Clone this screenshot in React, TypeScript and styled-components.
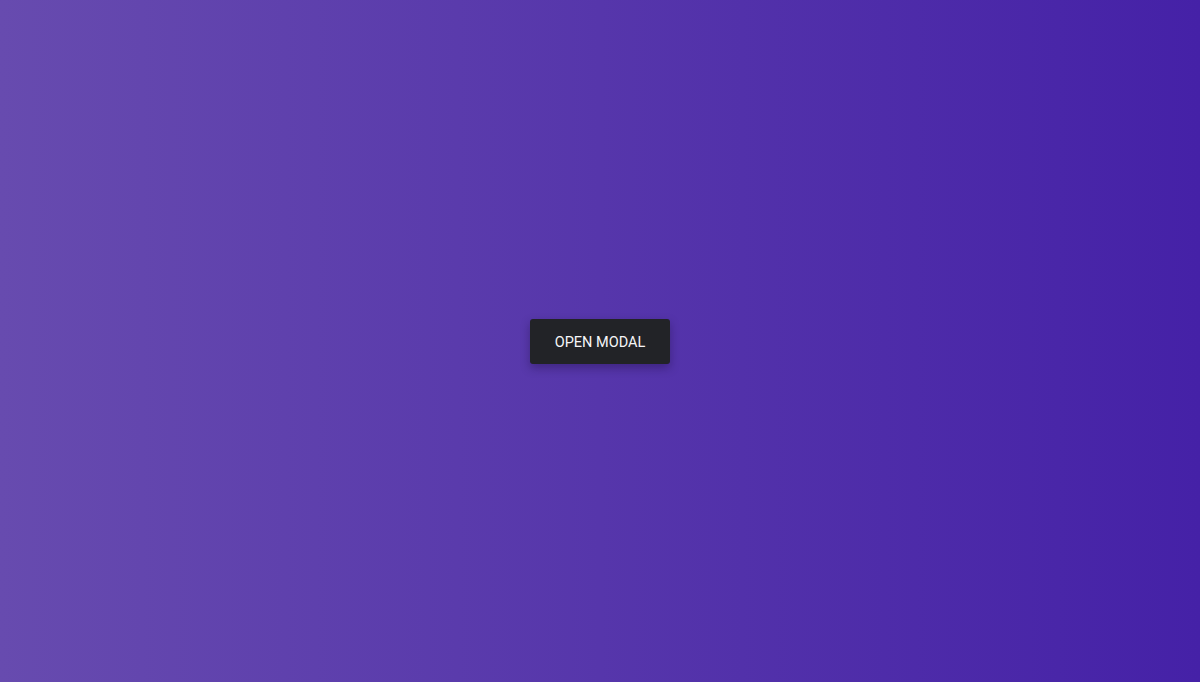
import { FC } from "react";
import styled, { createGlobalStyle } from "styled-components";

const GlobalStyle = createGlobalStyle`
  * {
    box-sizing: border-box;
  }

  html,
  body {
    margin: 0;
    padding: 0;
    height: 100%;
  }

  #root {
    height: 100%;
  }
`;

const App: FC = () => {
  return (
    <>
      <GlobalStyle />
      <Page>
        <OpenButton>OPEN MODAL</OpenButton>
      </Page>
    </>
  );
};

const Page = styled.main`
  height: 100vh;
  display: flex;
  justify-content: center;
  align-items: center;
  background: linear-gradient(to right, #674baf, #4521a7);
`;

const OpenButton = styled.button`
  width: 140px;
  height: 45px;
  padding: 2px 0 0;
  border: none;
  border-radius: 3px;
  background-color: #222327;
  color: #f6f6f8;
  font-family: Roboto, "Noto Sans", sans-serif;
  font-size: 14.5px;
  box-shadow: 0 4px 10px rgba(20, 10, 50, 0.35);
  cursor: pointer;
`;

export default App;
